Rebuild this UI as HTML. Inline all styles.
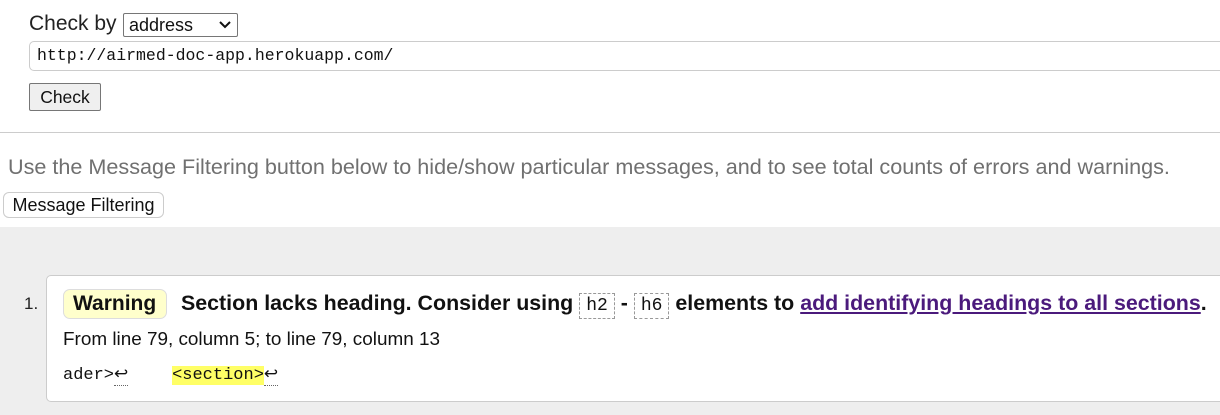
<!DOCTYPE html>
<html><head><meta charset="utf-8"><style>
body{margin:0;width:1220px;height:415px;overflow:hidden;background:#fff;font-family:"Liberation Sans",Arial,sans-serif;position:relative}
.a{position:absolute;white-space:nowrap}
</style></head><body>
<div class="a" style="left:-10px;top:-10px;width:1240px;height:142px;border:1px solid #ccc;border-radius:8px;border-top:none"></div>
<div class="a" style="left:29px;top:12px;font-size:21px;color:#222">Check by</div>
<div class="a" style="left:123px;top:13px;border:1px solid #767676;border-radius:2px;font-size:18px;line-height:22px;padding-left:5px;box-sizing:border-box;width:115px;height:24px;color:#111">address<svg style="position:absolute;right:6px;top:7px" width="12" height="8"><path d="M1 1l5 5 5-5" stroke="#111" stroke-width="2" fill="none"/></svg></div>
<div class="a" style="left:29px;top:41px;width:1200px;height:30px;border:1px solid #ccc;border-radius:5px;box-sizing:border-box"></div>
<div class="a" style="left:37px;top:46px;font-family:'Liberation Mono',monospace;font-size:16.5px;color:#111">http://airmed-doc-app.herokuapp.com/</div>
<div class="a" style="left:29px;top:83px;width:72px;height:28px;border:1px solid #767676;border-radius:2px;background:#efefef;box-sizing:border-box;font-size:17.5px;text-align:center;line-height:26px;color:#111">Check</div>
<div class="a" style="left:8px;top:154px;font-size:21.6px;color:#707070">Use the Message Filtering button below to hide/show particular messages, and to see total counts of errors and warnings.</div>
<div class="a" style="left:3px;top:192px;width:161px;height:26px;border:1px solid #ccc;border-radius:6px;box-sizing:border-box;font-size:18px;text-align:center;line-height:24px;color:#111">Message Filtering</div>
<div class="a" style="left:0;top:227px;width:1220px;height:188px;background:#eee"></div>
<div class="a" style="left:46px;top:275px;width:1200px;height:127px;background:#fff;border:1px solid #ccc;border-radius:5px;box-sizing:border-box"></div>
<div class="a" style="left:24px;top:294px;font-size:17px;color:#222">1.</div>
<div class="a" style="left:63px;top:289px;width:104px;height:30px;background:#ffffcc;border:1px solid #ddd;border-radius:7px;box-sizing:border-box"></div>
<div class="a" style="left:73px;top:292px;font-size:21px;font-weight:bold;color:#111">Warning</div>
<div class="a" style="left:181px;top:291px;font-size:21.4px;font-weight:bold;color:#111">Section lacks heading. Consider using <span style="display:inline-block;border:1px dashed #999;font-family:'Liberation Mono',monospace;font-weight:normal;font-size:18px;padding:2px 6px">h2</span> - <span style="display:inline-block;border:1px dashed #999;font-family:'Liberation Mono',monospace;font-weight:normal;font-size:18px;padding:2px 6px">h6</span> elements to <span style="color:#4b1a7c;text-decoration:underline">add identifying headings to all sections</span>.</div>
<div class="a" style="left:63px;top:329px;font-size:18.9px;color:#111">From line 79, column 5; to line 79, column 13</div>
<div class="a" style="left:63px;top:364px;font-family:'Liberation Mono',monospace;font-size:17px;color:#111">ader&gt;<span style="border-bottom:1px dotted #666">↩</span>&nbsp;&nbsp;&nbsp;&nbsp;<span style="background:#ffff66;margin-left:3px">&lt;section&gt;</span><span style="border-bottom:1px dotted #666">↩</span></div>
</body></html>
